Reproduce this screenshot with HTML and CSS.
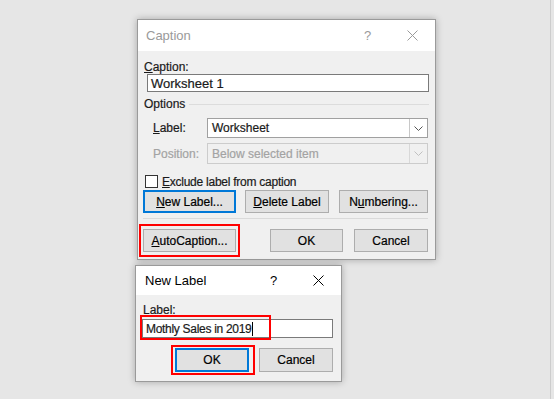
FILE: index.html
```html
<!DOCTYPE html>
<html lang="en">
<head>
    <meta charset="UTF-8">
    <meta name="viewport" content="width=device-width, initial-scale=1.0">
    <title>Caption</title>
    <link rel="stylesheet" href="styles.css">
</head>
<body>
    <div class="page">
        <div class="dialog dlg-caption">
            <div class="titlebar inactive">
                <span class="title">Caption</span>
                <span class="tb-help">?</span>
                <span class="tb-close">
                    <svg width="11" height="11" viewBox="0 0 11 11"><path d="M0.5 0.5 L10.5 10.5 M10.5 0.5 L0.5 10.5" stroke="currentColor" stroke-width="1" fill="none"/></svg>
                </span>
            </div>
            <div class="dlg-body">
                <div class="field-label"><u>C</u>aption:</div>
                <div class="textbox caption-box">Worksheet 1</div>
                <div class="group-head"><span>Options</span><span class="rule"></span></div>
                <div class="option-row">
                    <span class="row-label"><u>L</u>abel:</span>
                    <div class="combo">
                        <span class="combo-text">Worksheet</span>
                        <span class="combo-btn">
                            <svg width="9" height="5" viewBox="0 0 9 5"><path d="M0.5 0.5 L4.5 4.5 L8.5 0.5" stroke="currentColor" fill="none"/></svg>
                        </span>
                    </div>
                </div>
                <div class="option-row disabled">
                    <span class="row-label">Position:</span>
                    <div class="combo">
                        <span class="combo-text">Below selected item</span>
                        <span class="combo-btn">
                            <svg width="9" height="5" viewBox="0 0 9 5"><path d="M0.5 0.5 L4.5 4.5 L8.5 0.5" stroke="currentColor" fill="none"/></svg>
                        </span>
                    </div>
                </div>
                <div class="check-row">
                    <span class="checkbox"></span>
                    <span><u>E</u>xclude label from caption</span>
                </div>
                <div class="btn-row">
                    <button class="btn focused btn-new"><u>N</u>ew Label...</button>
                    <button class="btn btn-delete"><u>D</u>elete Label</button>
                    <button class="btn btn-numbering">N<u>u</u>mbering...</button>
                </div>
                <div class="separator"></div>
                <div class="footer-row">
                    <span class="marked mark-auto">
                        <button class="btn btn-auto"><u>A</u>utoCaption...</button>
                    </span>
                    <button class="btn btn-ok">OK</button>
                    <button class="btn btn-cancel">Cancel</button>
                </div>
            </div>
        </div>

        <div class="dialog dlg-newlabel">
            <div class="titlebar">
                <span class="title">New Label</span>
                <span class="tb-help">?</span>
                <span class="tb-close">
                    <svg width="11" height="11" viewBox="0 0 11 11"><path d="M0.5 0.5 L10.5 10.5 M10.5 0.5 L0.5 10.5" stroke="currentColor" stroke-width="1" fill="none"/></svg>
                </span>
            </div>
            <div class="dlg-body nl-body">
                <div class="field-label nl-label">Label:</div>
                <div class="textbox nl-box">
                    <span>Mothly Sales in 2019</span><span class="caret"></span>
                    <span class="mark-input"></span>
                </div>
                <div class="nl-buttons">
                    <span class="marked mark-ok">
                        <button class="btn focused btn-nl">OK</button>
                    </span>
                    <button class="btn btn-nl">Cancel</button>
                </div>
            </div>
        </div>
    </div>
</body>
</html>
```

FILE: styles.css
```css
body {
    margin: 0;
    padding: 0;
    background: #e6e6e6;
    font-family: "Liberation Sans", Arial, sans-serif;
    font-size: 12px;
    color: #1a1a1a;
    -webkit-text-stroke: 0.2px;
}
.page {
    width: 551px;
    height: 399px;
    padding-top: 19px;
    box-sizing: border-box;
    border-right: 1px solid #cdcdcd;
    overflow: hidden;
}
.dialog {
    box-sizing: border-box;
    background: #f0f0f0;
    border: 1px solid #9a9a9a;
    box-shadow: 0 0 7px rgba(0, 0, 0, 0.28);
}
.dlg-caption {
    width: 299px;
    margin-left: 137px;
}
.dlg-newlabel {
    width: 207px;
    margin-left: 135px;
    margin-top: 5px;
}
.titlebar {
    display: flex;
    align-items: center;
    height: 31px;
    background: #fff;
    color: #000;
    -webkit-text-stroke: 0;
}
.dlg-newlabel .titlebar {
    height: 29px;
}
.titlebar .title {
    flex: 1;
    padding-left: 8px;
    font-size: 13px;
}
.dlg-newlabel .titlebar .title {
    padding-left: 9px;
}
.titlebar.inactive {
    color: #9a9a9a;
}
.tb-help,
.tb-close {
    width: 45px;
    display: flex;
    justify-content: center;
    align-items: center;
    font-size: 13px;
}
.dlg-body {
    padding: 0 7px 7px 5px;
}
.field-label {
    margin-top: 9px;
    margin-left: 1px;
    height: 14px;
    line-height: 14px;
}
.textbox {
    box-sizing: border-box;
    background: #fff;
    border: 1px solid #7a7a7a;
    font-size: 13px;
    padding-left: 3px;
    display: flex;
    align-items: center;
}
.caption-box {
    margin-left: 4px;
    margin-right: -1px;
    height: 18px;
}
.group-head {
    display: flex;
    align-items: center;
    margin-top: 5px;
    margin-left: 1px;
    margin-right: -1px;
    height: 14px;
}
.group-head .rule {
    flex: 1;
    margin-left: 4px;
    border-top: 1px solid #dcdcdc;
}
.option-row {
    display: flex;
    align-items: center;
    margin-top: 7px;
    height: 20px;
}
.option-row.disabled {
    margin-top: 5px;
    height: 21px;
    color: #a3a3a3;
}
.row-label {
    width: 64px;
    box-sizing: border-box;
    padding-left: 10px;
}
.combo {
    flex: 1;
    height: 100%;
    box-sizing: border-box;
    display: flex;
    background: #fff;
    border: 1px solid #a0a0a0;
}
.combo-text {
    flex: 1;
    padding-left: 4px;
    display: flex;
    align-items: center;
}
.combo-btn {
    width: 17px;
    display: flex;
    justify-content: center;
    align-items: center;
    border-left: 1px solid #c8c8c8;
    color: #555;
}
.disabled .combo {
    background: #f0f0f0;
    border-color: #cccccc;
}
.disabled .combo-btn {
    color: #c0c0c0;
    border-left-color: #d8d8d8;
}
.check-row {
    display: flex;
    align-items: center;
    margin-top: 11px;
    height: 13px;
    letter-spacing: -0.25px;
}
.checkbox {
    width: 13px;
    height: 13px;
    box-sizing: border-box;
    margin-left: 2px;
    margin-right: 4px;
    background: #fff;
    border: 1px solid #333;
}
.btn {
    box-sizing: border-box;
    height: 23px;
    padding: 0;
    background: #e1e1e1;
    border: 1px solid #adadad;
    font-family: "Liberation Sans", Arial, sans-serif;
    font-size: 12px;
    color: #000;
    -webkit-text-stroke: 0.2px;
}
.btn.focused {
    border-color: #0078d7;
    box-shadow: inset 0 0 0 1px #0078d7;
}
.btn-row {
    display: flex;
    margin-top: 2px;
}
.btn-new { width: 93px; }
.btn-delete { width: 84px; margin-left: 9px; }
.btn-numbering { width: 89px; margin-left: 10px; }
.separator {
    margin-top: 5px;
    border-top: 1px solid #dadada;
}
.footer-row {
    display: flex;
    margin-top: 10px;
}
.marked {
    position: relative;
    display: flex;
}
.marked::after {
    content: "";
    position: absolute;
    border: 2px solid #f00;
}
.mark-auto::after {
    top: -5px;
    bottom: -5px;
    left: -4px;
    right: -4px;
}
.btn-auto { width: 93px; }
.btn-ok { width: 73px; margin-left: 34px; }
.btn-cancel { width: 74px; margin-left: 11px; }

.nl-body {
    padding: 0 8px 9px 6px;
}
.nl-label {
    margin-top: 8px;
}
.nl-box {
    position: relative;
    margin-top: 2px;
    height: 19px;
    font-size: 12px;
    letter-spacing: -0.3px;
}
.caret {
    width: 0;
    height: 14px;
    margin-left: 1px;
    border-left: 1px solid #000;
}
.mark-input {
    position: absolute;
    top: -5px;
    left: -3px;
    width: 131px;
    height: 25px;
    box-sizing: border-box;
    border: 2px solid #f00;
}
.nl-buttons {
    display: flex;
    justify-content: flex-end;
    margin-top: 10px;
}
.btn-nl {
    width: 74px;
    height: 24px;
    margin-left: 10px;
}
.mark-ok .btn-nl {
    margin-left: 0;
}
.mark-ok::after {
    top: -3px;
    bottom: -3px;
    left: -4px;
    right: -6px;
}
```
